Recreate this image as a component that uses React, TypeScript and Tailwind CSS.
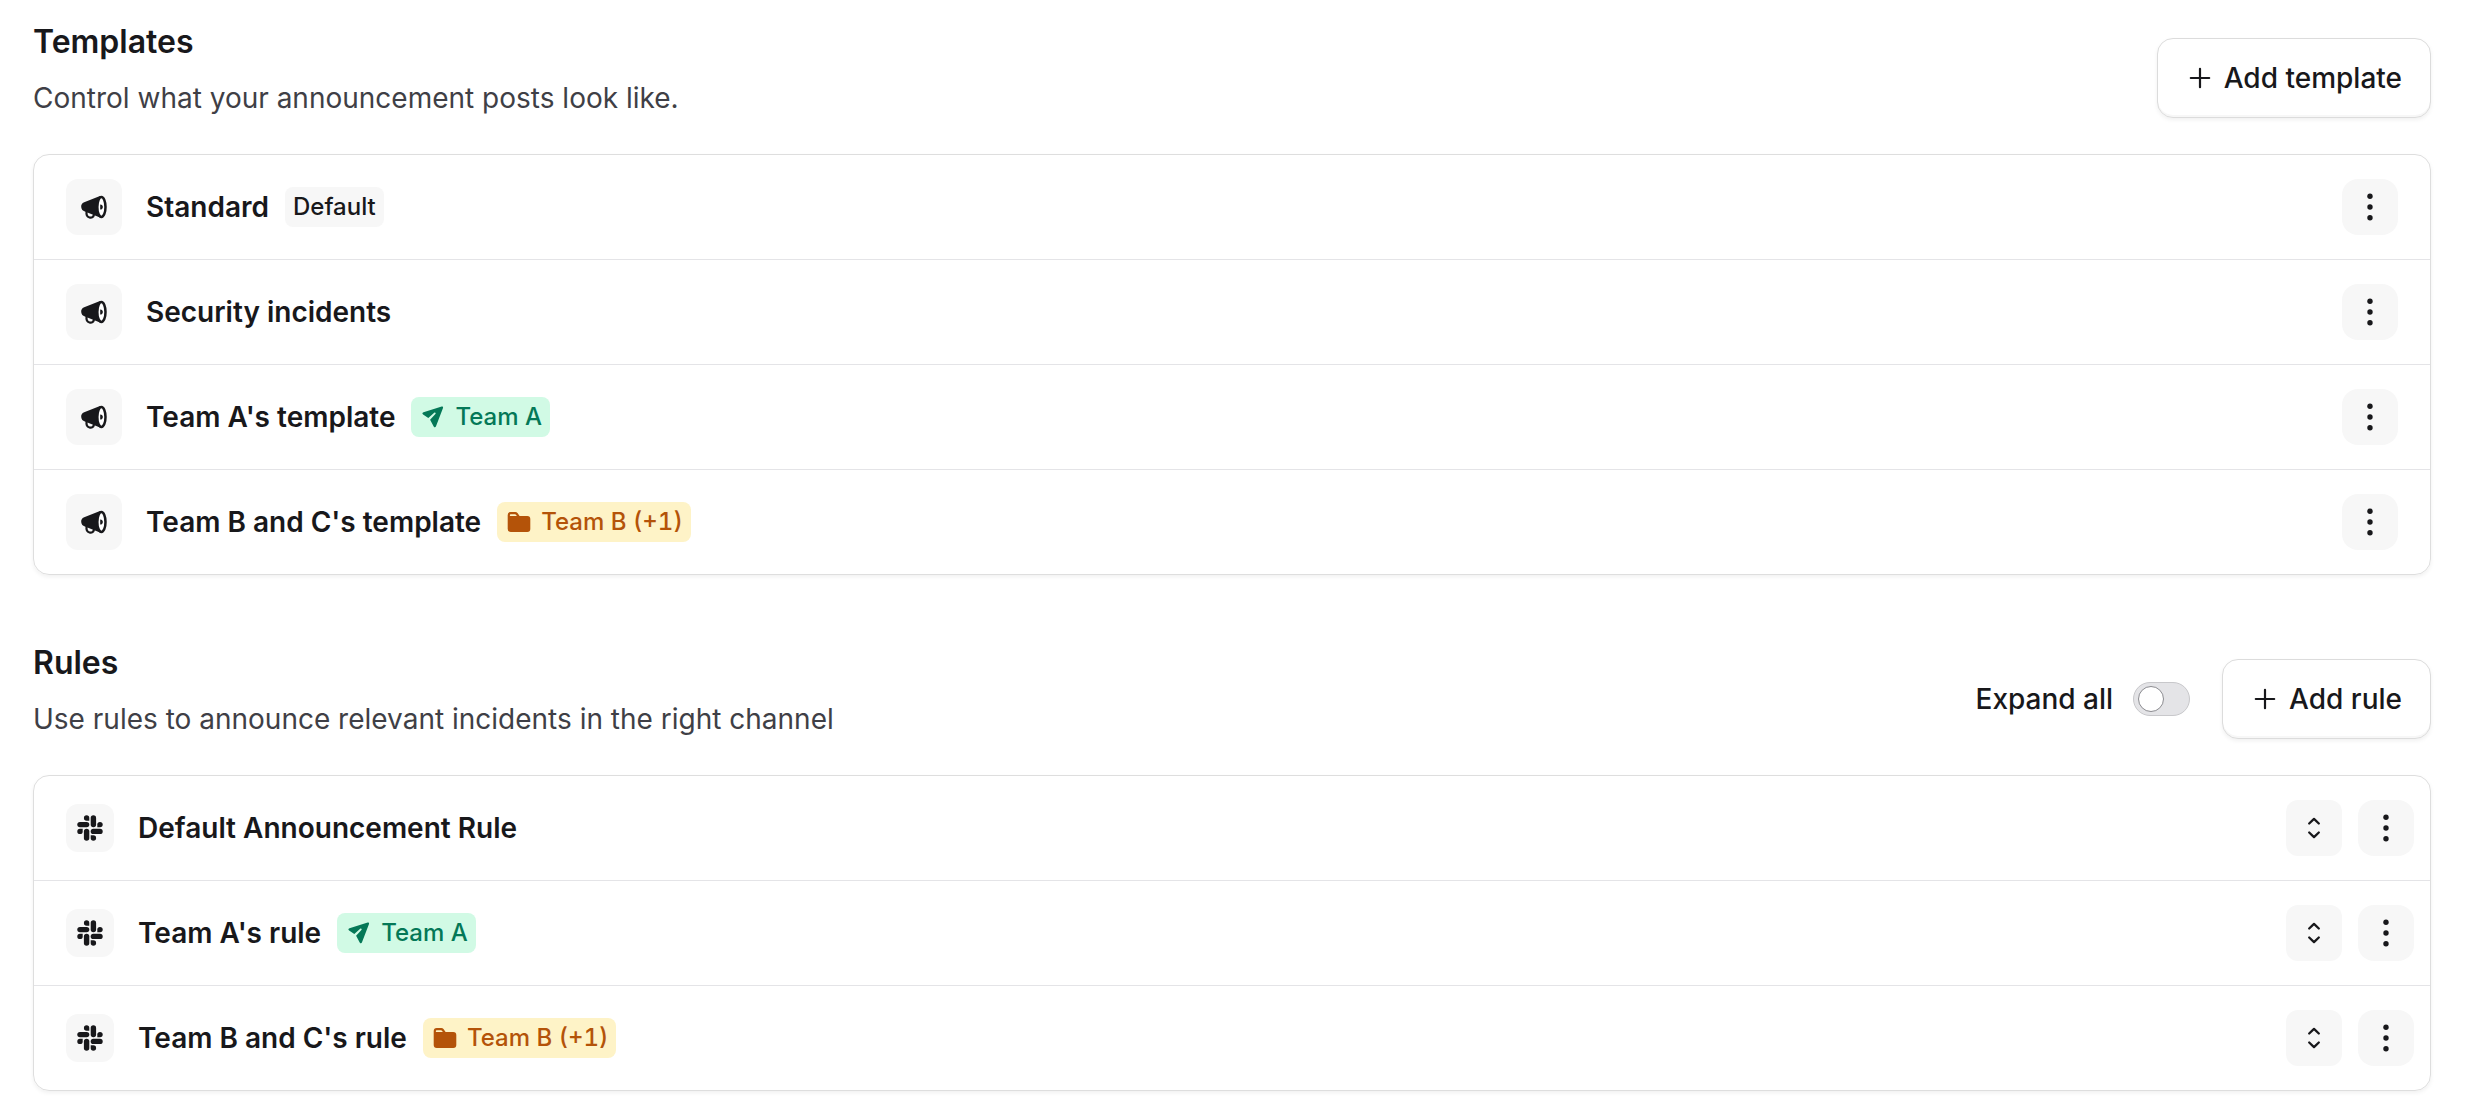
import { useState } from 'react';
import type { ReactNode } from 'react';

type TeamBadge = 'default' | 'teamA' | 'teamB';

interface Item {
  name: string;
  badge?: TeamBadge;
}

const templates: Item[] = [
  { name: 'Standard', badge: 'default' },
  { name: 'Security incidents' },
  { name: "Team A's template", badge: 'teamA' },
  { name: "Team B and C's template", badge: 'teamB' },
];

const rules: Item[] = [
  { name: 'Default Announcement Rule' },
  { name: "Team A's rule", badge: 'teamA' },
  { name: "Team B and C's rule", badge: 'teamB' },
];

const MegaphoneIcon = () => (
  <svg viewBox="0 0 28 28" className="w-7 h-7" fill="none" aria-hidden="true">
    <path
      d="M20 3 4.2 9.200C1.900 10.100 1 11.800 1.200 14c.2 2.300 1.500 3.900 3.700 4.500L20 24.500z"
      fill="currentColor"
    />
    <path
      d="M6.600 18.500c-.5 3.200.6 5.400 2.900 6 2.400.6 4-.5 4.500-3"
      stroke="currentColor"
      strokeWidth="2.200"
      strokeLinecap="round"
    />
    <ellipse cx="21.400" cy="14" rx="4.100" ry="10" fill="white" stroke="currentColor" strokeWidth="2.500" />
    <path d="M20.200 11.400c1.900 0 2.600 1.100 2.600 2.600s-.7 2.600-2.600 2.600z" fill="currentColor" />
  </svg>
);

const SlackIcon = () => (
  <svg viewBox="0 0 26 26" className="w-[26px] h-[26px]" fill="currentColor" aria-hidden="true">
    <rect x="13.700" y="0.300" width="5.400" height="12" rx="2.700" />
    <rect x="6.900" y="13.700" width="5.400" height="12" rx="2.700" />
    <rect x="0.300" y="6.900" width="12" height="5.400" rx="2.700" />
    <rect x="13.700" y="13.700" width="12" height="5.400" rx="2.700" />
    <path d="M12.300 5.700H9.600a2.700 2.700 0 1 1 2.700-2.700z" />
    <path d="M20.300 12.300V9.600a2.700 2.700 0 1 1 2.700 2.700z" />
    <path d="M13.700 20.300h2.700a2.700 2.700 0 1 1-2.700 2.700z" />
    <path d="M5.700 13.700v2.700A2.700 2.700 0 1 1 3 13.700z" />
  </svg>
);

const PlusIcon = () => (
  <svg viewBox="0 0 28 28" className="w-7 h-7" stroke="currentColor" strokeWidth="2.200" strokeLinecap="round" aria-hidden="true">
    <path d="M14 4.800v18.400M4.800 14h18.400" />
  </svg>
);

const KebabIcon = () => (
  <svg viewBox="0 0 28 28" className="w-7 h-7" fill="currentColor" aria-hidden="true">
    <circle cx="14" cy="3.300" r="2.700" />
    <circle cx="14" cy="14" r="2.700" />
    <circle cx="14" cy="24.700" r="2.700" />
  </svg>
);

const ExpandIcon = () => (
  <svg
    viewBox="0 0 24 24"
    className="w-6 h-6"
    fill="none"
    stroke="currentColor"
    strokeWidth="2.300"
    strokeLinecap="round"
    strokeLinejoin="round"
    aria-hidden="true"
  >
    <path d="M7.200 7.500 12 2.900l4.800 4.600M7.200 16.500l4.800 4.600 4.800-4.600" />
  </svg>
);

const PlaneIcon = () => (
  <svg viewBox="0 0 28 28" className="w-7 h-7" fill="currentColor" aria-hidden="true">
    <path d="M22.700 3.500 4.500 9.300c-1.300.4-1.500 1.500-.4 2.200l5.200 3.500 5.900-5.200c1-.8 2 .2 1.200 1.200l-5.300 5.800 3.600 6.700c.7 1.200 1.900 1.100 2.300-.2l7-18.400c.3-.9-.300-1.700-1.300-1.400z" />
  </svg>
);

const FolderIcon = () => (
  <svg viewBox="0 0 28 28" className="w-7 h-7" fill="currentColor" aria-hidden="true">
    <path
      fillRule="evenodd"
      d="M2.700 7a3 3 0 0 1 3-3h4.600c.9 0 1.700.4 2.200 1.100L14.600 8h7.700a3 3 0 0 1 3 3v10a3 3 0 0 1-3 3H5.700a3 3 0 0 1-3-3zM4.900 8h7l-1.200-1.400a1 1 0 0 0-.8-.4H5.900c-.6 0-1 .4-1 1z"
    />
  </svg>
);

const Badge = ({ type }: { type: TeamBadge }) => {
  if (type === 'default') {
    return (
      <span className="h-10 px-2 flex items-center rounded-lg bg-[#f7f7f7] text-[24px] font-medium">
        Default
      </span>
    );
  }
  if (type === 'teamA') {
    return (
      <span className="h-10 px-2 flex items-center gap-2 rounded-lg bg-[#d1fae5] text-[#047857] text-[24px] font-medium tabular-nums">
        <PlaneIcon />
        Team A
      </span>
    );
  }
  return (
    <span className="h-10 px-2 flex items-center gap-2 rounded-lg bg-[#fef3c7] text-[#b45309] text-[24px] font-medium tabular-nums">
      <FolderIcon />
      Team B (+1)
    </span>
  );
};

const KebabButton = ({ label }: { label: string }) => (
  <button
    aria-label={label}
    className="w-14 h-14 flex items-center justify-center rounded-2xl bg-[#f7f7f7] hover:bg-gray-200"
  >
    <KebabIcon />
  </button>
);

const AddButton = ({ children }: { children: ReactNode }) => (
  <button className="h-20 px-7 flex items-center gap-2.5 rounded-2xl border border-[#dcdcdc] bg-white shadow-[inset_0_-2px_0_#f7f7f7,0_2px_4px_rgba(0,0,0,0.06)] text-[28px] font-medium hover:bg-gray-50">
    <PlusIcon />
    {children}
  </button>
);

interface SectionProps {
  title: string;
  description: string;
  actions: ReactNode;
  children: ReactNode;
}

const Section = ({ title, description, actions, children }: SectionProps) => (
  <section>
    <div className="flex items-end justify-between mb-9">
      <div className="flex flex-col gap-4">
        <h2 className="text-[32px] leading-10 font-semibold">{title}</h2>
        <p className="text-[28px] leading-10 text-[#3f3f46]">{description}</p>
      </div>
      <div className="flex items-center gap-8">{actions}</div>
    </div>
    <ul className="rounded-2xl border border-[#dedede] shadow-[0_2px_4px_rgba(0,0,0,0.06)] divide-y divide-[#e4e4e7]">
      {children}
    </ul>
  </section>
);

export default function App() {
  const [expandAll, setExpandAll] = useState(false);

  return (
    <main className="flex flex-col gap-[68px] pt-[22px] pb-7 pl-[33px] pr-[35px] bg-white text-[#18181b] font-[Inter,sans-serif]">
      <Section
        title="Templates"
        description="Control what your announcement posts look like."
        actions={<AddButton>Add template</AddButton>}
      >
        {templates.map((template) => (
          <li key={template.name} className="flex items-center px-8 py-6">
            <span className="w-14 h-14 mr-6 flex items-center justify-center rounded-xl bg-[#f7f7f7]">
              <MegaphoneIcon />
            </span>
            <div className="flex-1 flex items-center gap-4 text-[28px] leading-10">
              <span className="font-semibold">{template.name}</span>
              {template.badge && <Badge type={template.badge} />}
            </div>
            <KebabButton label={`Options for ${template.name}`} />
          </li>
        ))}
      </Section>

      <Section
        title="Rules"
        description="Use rules to announce relevant incidents in the right channel"
        actions={
          <>
            <label className="flex items-center gap-5 text-[28px] font-medium cursor-pointer">
              Expand all
              <input
                type="checkbox"
                role="switch"
                checked={expandAll}
                onChange={(e) => setExpandAll(e.target.checked)}
                className="appearance-none w-[57px] h-[34px] px-1 flex items-center rounded-full border border-[#c8c8cb] bg-[#e4e4e7] checked:justify-end checked:bg-[#18181b] before:block before:w-[26px] before:h-[26px] before:rounded-full before:border before:border-[#8b8b90] before:bg-white"
              />
            </label>
            <AddButton>Add rule</AddButton>
          </>
        }
      >
        {rules.map((rule) => (
          <li key={rule.name} className="flex items-center gap-4 pl-8 pr-4 py-6">
            <div className="flex-1 flex items-center gap-4 text-[28px] leading-10">
              <span className="w-12 h-12 mr-2 flex items-center justify-center rounded-xl bg-[#f7f7f7]">
                <SlackIcon />
              </span>
              <span className="font-semibold">{rule.name}</span>
              {rule.badge && <Badge type={rule.badge} />}
            </div>
            <button
              aria-label={`Expand ${rule.name}`}
              aria-expanded={expandAll}
              className="w-14 h-14 flex items-center justify-center rounded-xl bg-[#f7f7f7] hover:bg-gray-200"
            >
              <ExpandIcon />
            </button>
            <KebabButton label={`Options for ${rule.name}`} />
          </li>
        ))}
      </Section>
    </main>
  );
}
